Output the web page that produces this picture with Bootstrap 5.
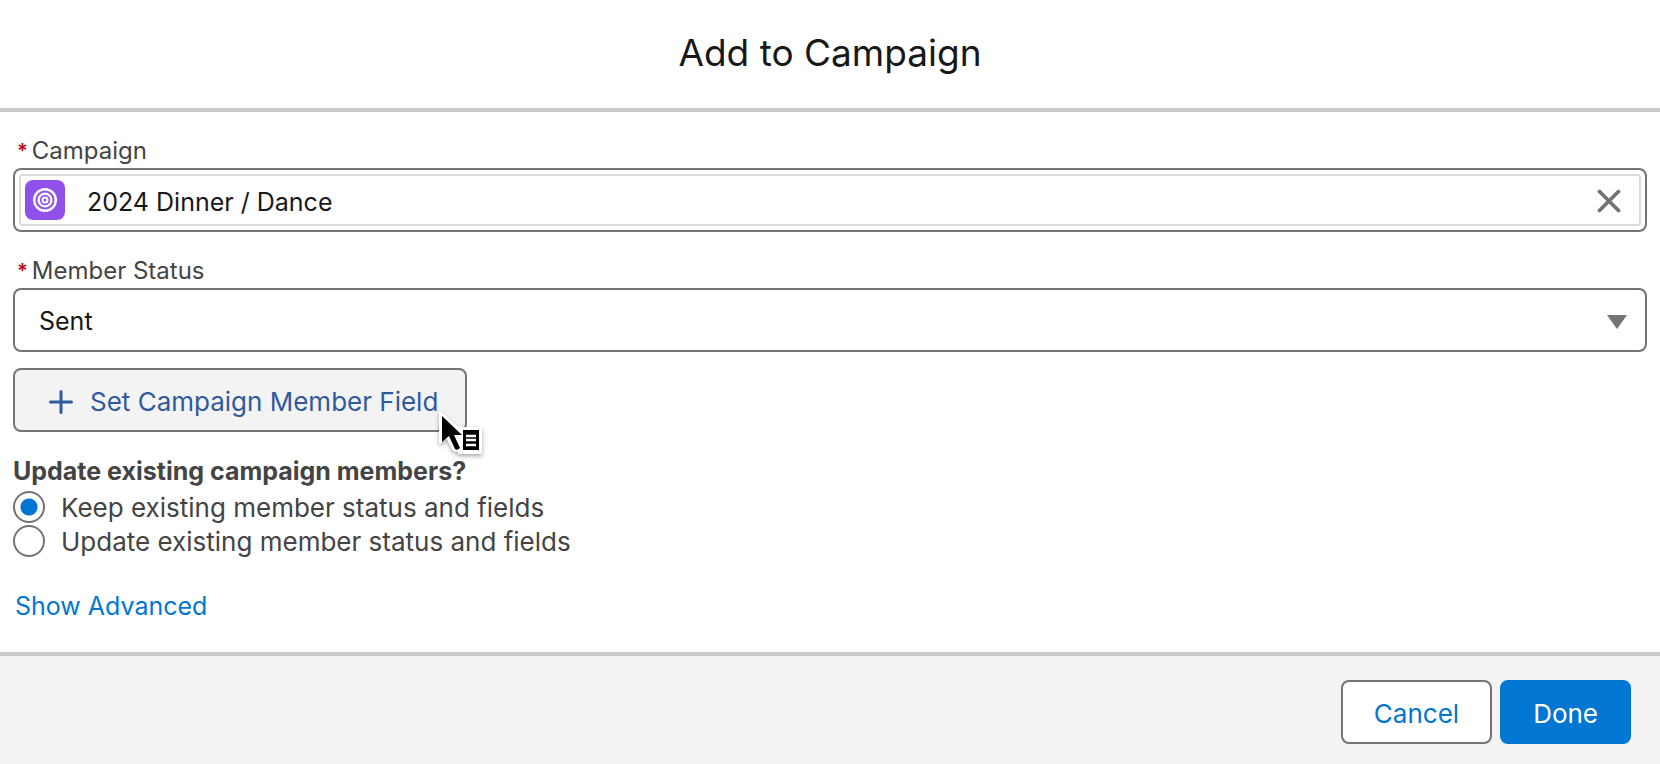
<!DOCTYPE html>
<html lang="en">
<head>
<meta charset="utf-8">
<meta name="viewport" content="width=device-width, initial-scale=1">
<title>Add to Campaign</title>
<link href="https://cdn.jsdelivr.net/npm/bootstrap@5.3.0/dist/css/bootstrap.min.css" rel="stylesheet">
<style>
  body { font-family: Inter, "Liberation Sans", sans-serif; font-size: 25px; line-height: 36px; color: #444; background: #fff; }
  .dialog-head { border-bottom: 4px solid #c9c9c9; padding: 29px 16px 31px; }
  .dialog-title { font-size: 37px; line-height: 48px; font-weight: 400; color: #181818; }
  .dialog-main { padding: 20px 13px 28px; }
  .field-label { font-size: 24px; line-height: 34px; padding: 2px 0 0 4px; gap: 4px; }
  .box + .field-label { margin-top: 20px; }
  .req { color: #ba0517; font-size: 20px; font-weight: 600; }
  .box { height: 64px; border: 2px solid #747474; border-radius: 8px; font-size: 25px; }
  .lookup { padding: 4px; }
  .lookup-pill { border: 2px solid #dddbda; border-radius: 4px; padding: 0 18px 0 4px; height: 52px; }
  .lookup-pill input { font-size: 25px; line-height: 36px; color: #181818; margin-left: 22px; padding: 4px 0 0; }
  .lookup-pill button { padding-top: 2px; }
  .status-select { padding: 4px 24px 0; color: #181818; background-size: 20px 14px; background-position: right 18px top 25px; }
  .box-btn { height: 64px; border-width: 2px; border-radius: 8px; font-size: 26px; line-height: 36px; padding: 4px 31px 0; }
  .btn-field { --bs-btn-color: #2f5b9d; --bs-btn-bg: #f3f3f3; --bs-btn-border-color: #747474; --bs-btn-hover-color: #2f5b9d; --bs-btn-hover-bg: #f3f3f3; --bs-btn-hover-border-color: #747474; gap: 17px; padding: 4px 27px 0 34px; }
  .btn-cancel { --bs-btn-color: #0176d3; --bs-btn-bg: #fff; --bs-btn-border-color: #747474; --bs-btn-hover-color: #0176d3; --bs-btn-hover-bg: #f3f3f3; --bs-btn-hover-border-color: #747474; }
  .btn-done { --bs-btn-color: #fff; --bs-btn-bg: #0176d3; --bs-btn-border-color: #0176d3; --bs-btn-hover-color: #fff; --bs-btn-hover-bg: #014486; --bs-btn-hover-border-color: #014486; }
  .pointer { right: -17px; bottom: -25px; width: 46px; height: 48px; pointer-events: none; filter: drop-shadow(0 2px 2px rgba(0,0,0,.35)); }
  .members { margin-top: 21px; }
  .members legend { font-size: 25px; line-height: 37px; font-weight: 700; }
  .choice { height: 34px; gap: 16px; font-size: 26px; }
  .choice label { padding-top: 2px; }
  .choice .form-check-input { width: 32px; height: 32px; border: 2px solid #747474; background-color: #fff; }
  .choice .form-check-input:checked { background-image: radial-gradient(circle, #0176d3 0 8px, transparent 9px); background-size: 100% 100%; }
  .advanced { margin-top: 30px; padding-left: 2px; }
  .advanced a { color: #0176d3; }
  .dialog-foot { border-top: 4px solid #c9c9c9; background: #f3f3f3; padding: 24px 29px 20px; }
</style>
</head>
<body class="d-flex flex-column min-vh-100">
<header class="dialog-head text-center">
  <h1 class="dialog-title m-0">Add to Campaign</h1>
</header>

<main class="dialog-main flex-grow-1">
  <form id="campaign-form">
    <label for="campaign" class="field-label d-flex"><span class="req">*</span>Campaign</label>
    <div class="box lookup">
      <div class="lookup-pill d-flex align-items-center">
        <svg class="flex-shrink-0" width="40" height="40" viewBox="0 0 40 40" aria-hidden="true">
          <rect width="40" height="40" rx="8" fill="#9050e9"/>
          <g fill="none" stroke="#fff" stroke-width="2.4"><circle cx="20" cy="20" r="10.8"/><circle cx="20" cy="20" r="6.4"/></g>
          <circle cx="20" cy="20" r="2.5" fill="none" stroke="#fff" stroke-width="2"/>
        </svg>
        <input id="campaign" type="text" class="form-control border-0 bg-transparent shadow-none" value="2024 Dinner / Dance">
        <button type="button" class="btn px-0 pb-0 border-0 d-flex flex-shrink-0" aria-label="Clear selection">
          <svg width="24" height="24" viewBox="0 0 24 24"><path d="M2.5 2.5l19 19M21.5 2.5l-19 19" stroke="#747474" stroke-width="3.8" stroke-linecap="round"/></svg>
        </button>
      </div>
    </div>

    <label for="status" class="field-label d-flex"><span class="req">*</span>Member Status</label>
    <select id="status" class="form-select box status-select" style="background-image:url(&quot;data:image/svg+xml,%3Csvg xmlns='http://www.w3.org/2000/svg' viewBox='0 0 20 14'%3E%3Cpath d='M0 0h20L10 14z' fill='%23747474'/%3E%3C/svg%3E&quot;)">
      <option selected>Sent</option>
      <option>Responded</option>
    </select>

    <div class="d-inline-block position-relative mt-3 align-top">
      <button type="button" class="btn btn-field box-btn d-flex align-items-center">
        <svg width="24" height="24" viewBox="0 0 24 24" aria-hidden="true"><path d="M12 1.5v21M1.5 12h21" stroke="currentColor" stroke-width="3" stroke-linecap="round"/></svg>
        Set Campaign Member Field
      </button>
      <svg class="pointer position-absolute" viewBox="0 0 46 48" aria-hidden="true">
        <path d="M2 3V34L9 28L15 40Q17 43 21 41V44H43V19H24L19 18Z" fill="#fff" stroke="#fff" stroke-width="2" stroke-linejoin="round"/>
        <path d="M4 7V33L11 27L17 40Q19 42 22 39L16 26H24Z"/>
        <path d="M25 21H41V41H25Z"/>
        <path d="M28 27h10M28 31h10M28 36h10" stroke="#fff" stroke-width="2.6"/>
      </svg>
    </div>

    <fieldset class="members">
      <legend class="m-0">Update existing campaign members?</legend>
      <div class="choice d-flex align-items-center">
        <input class="form-check-input m-0 flex-shrink-0" type="radio" name="existing" id="keep" checked>
        <label for="keep">Keep existing member status and fields</label>
      </div>
      <div class="choice d-flex align-items-center">
        <input class="form-check-input m-0 flex-shrink-0" type="radio" name="existing" id="update">
        <label for="update">Update existing member status and fields</label>
      </div>
    </fieldset>

    <div class="advanced"><a href="#" class="text-decoration-none">Show Advanced</a></div>
  </form>
</main>

<footer class="dialog-foot d-flex justify-content-end gap-2">
  <button type="button" class="btn btn-cancel box-btn">Cancel</button>
  <button type="submit" form="campaign-form" class="btn btn-done box-btn">Done</button>
</footer>
<script src="https://cdn.jsdelivr.net/npm/bootstrap@5.3.0/dist/js/bootstrap.bundle.min.js"></script>
</body>
</html>
